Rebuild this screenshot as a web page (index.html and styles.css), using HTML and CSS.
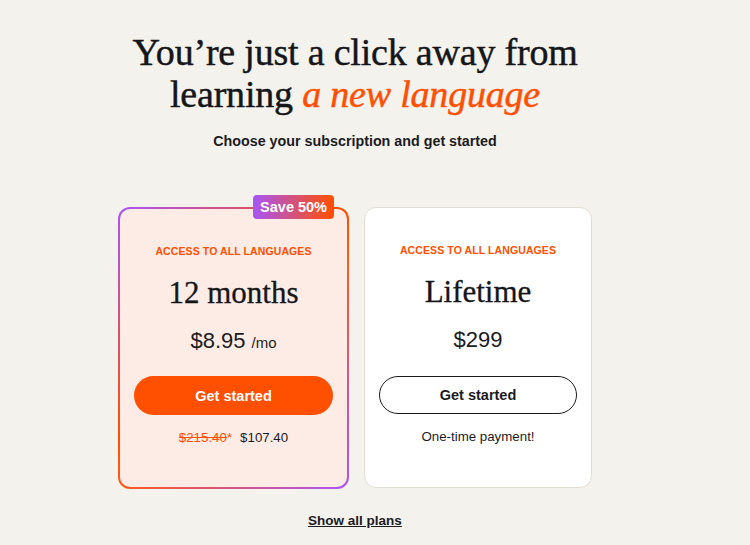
FILE: index.html
```html
<!DOCTYPE html>
<html lang="en">
<head>
<meta charset="utf-8">
<title>Choose your subscription</title>
<link rel="stylesheet" href="styles.css">
</head>
<body>
<main class="page">
  <h1 class="title">You’re just a click away from<br>learning <em>a new language</em></h1>
  <p class="subtitle">Choose your subscription and get started</p>
  <div class="plans">
    <div class="card card-featured">
      <span class="badge">Save 50%</span>
      <div class="card-inner">
        <p class="eyebrow">ACCESS TO ALL LANGUAGES</p>
        <h2 class="plan-name">12 months</h2>
        <p class="price">$8.95<span class="per">/mo</span></p>
        <a class="btn btn-primary" href="#">Get started</a>
        <p class="note"><s class="old">$215.40</s><span class="star">*</span><span class="new">$107.40</span></p>
      </div>
    </div>
    <div class="card card-plain">
      <div class="card-inner">
        <p class="eyebrow">ACCESS TO ALL LANGUAGES</p>
        <h2 class="plan-name">Lifetime</h2>
        <p class="price">$299</p>
        <a class="btn btn-outline" href="#">Get started</a>
        <p class="note">One-time payment!</p>
      </div>
    </div>
  </div>
  <a class="all-plans" href="#">Show all plans</a>
</main>
</body>
</html>
```
FILE: styles.css
```css
* { box-sizing: border-box; }
html, body { margin: 0; padding: 0; }
body {
  background: #f4f2ed;
  color: #1b1b1f;
  font-family: "Liberation Sans", Arial, sans-serif;
  width: 750px;
  height: 545px;
  overflow: hidden;
}
.page {
  width: 710px;
  display: flex;
  flex-direction: column;
  align-items: center;
  padding-top: 31px;
}
.title {
  margin: 0;
  font-family: "Liberation Serif", "Times New Roman", serif;
  font-weight: 400;
  font-size: 38px;
  line-height: 42px;
  text-align: center;
  color: #15161a;
  letter-spacing: -0.2px;
  -webkit-text-stroke: 0.45px #15161a;
}
.title em {
  color: #ff4f00;
  font-style: italic;
  -webkit-text-stroke: 0.45px #ff4f00;
}
.subtitle {
  margin: 18px 0 0;
  font-size: 14.3px;
  font-weight: 700;
  color: #1b1b1f;
}
.plans {
  margin-top: 58px;
  display: flex;
  gap: 15px;
  align-items: flex-start;
}
.card {
  position: relative;
  border-radius: 12px;
}
.card-featured {
  width: 231px;
  height: 282px;
  padding: 2px;
  background: linear-gradient(135deg, #a855f7 0%, #ff4f00 45%, #ff5a1a 55%, #a855f7 100%);
}
.card-featured .card-inner {
  background: #fdece5;
  border-radius: 10px;
  height: 100%;
  padding-top: 36px;
}
.card-plain {
  width: 228px;
  height: 281px;
  background: #ffffff;
  border: 1px solid #e2ded6;
}
.card-plain .card-inner {
  padding-top: 36px;
}
.card-inner {
  display: flex;
  flex-direction: column;
  align-items: center;
}
.badge {
  position: absolute;
  top: -12px;
  right: 15px;
  height: 24px;
  padding: 0 7px;
  display: flex;
  align-items: center;
  border-radius: 4px;
  background: linear-gradient(90deg, #a855f7, #ff4f00);
  color: #fff;
  font-weight: 700;
  font-size: 14.5px;
}
.eyebrow {
  margin: 0;
  color: #ff4f00;
  font-size: 10.5px;
  font-weight: 700;
  letter-spacing: 0.1px;
}
.plan-name {
  margin: 18px 0 0;
  font-family: "Liberation Serif", "Times New Roman", serif;
  font-weight: 400;
  font-size: 31px;
  line-height: 36px;
  color: #15161a;
  -webkit-text-stroke: 0.3px #15161a;
}
.price {
  margin: 17px 0 0;
  font-size: 22px;
  line-height: 26px;
  color: #1b1b1f;
}
.per {
  font-size: 15px;
  margin-left: 6px;
}
.btn {
  margin-top: 20px;
  width: 199px;
  height: 39px;
  border-radius: 20px;
  display: flex;
  align-items: center;
  justify-content: center;
  font-size: 14.5px;
  font-weight: 700;
  text-decoration: none;
}
.btn-primary {
  background: #ff4f00;
  color: #fff;
}
.btn-outline {
  margin-top: 23px;
  width: 198px;
  height: 38px;
  border: 1px solid #1b1b1f;
  color: #1b1b1f;
  background: #fff;
}
.note {
  margin: 15px 0 0;
  font-size: 13.3px;
  color: #1b1b1f;
}
.old {
  color: #ff4f00;
}
.star {
  color: #ff4f00;
  margin-right: 8px;
}
.all-plans {
  margin-top: 24px;
  font-size: 13.5px;
  font-weight: 700;
  color: #1b1b1f;
  text-decoration: underline;
}
```
